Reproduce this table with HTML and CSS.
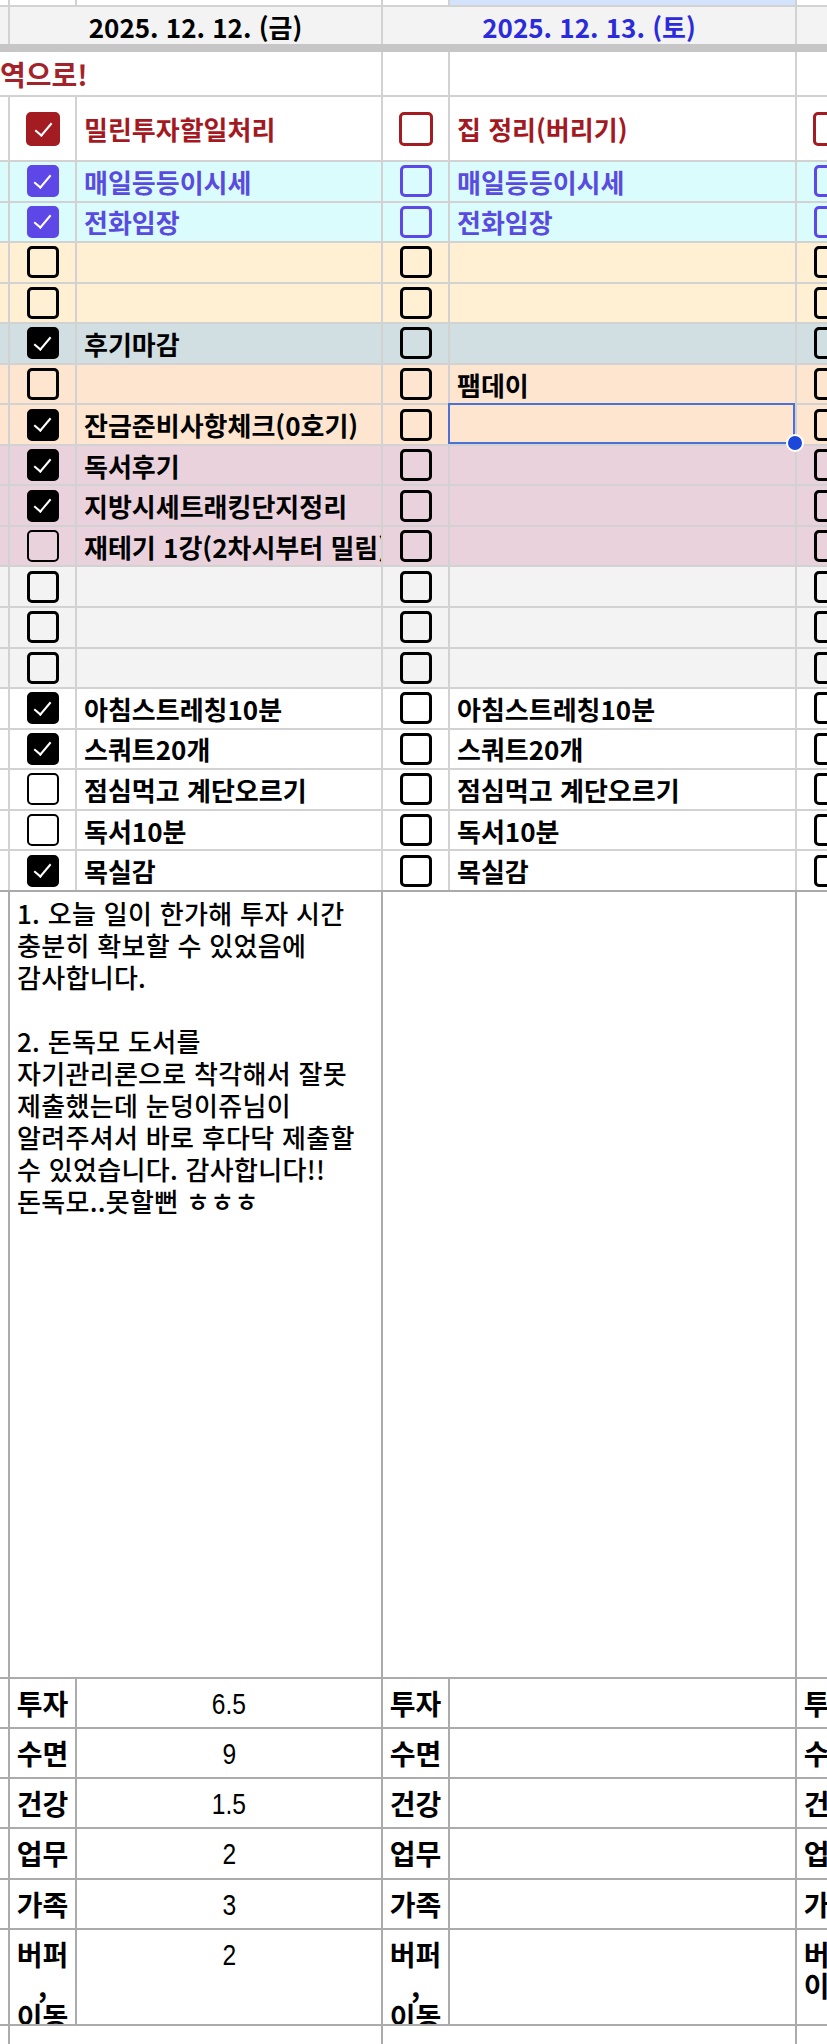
FILE: index.html
```html
<!DOCTYPE html>
<html lang="ko">
<head>
<meta charset="utf-8">
<title>Daily sheet</title>
<link rel="stylesheet" href="styles.css">
</head>
<body>
<div class="sheet">
  <div class="row r-top">
    <div class="c"></div><div class="c"></div><div class="c"></div><div class="c"></div><div class="c blue"></div><div class="c"></div>
  </div>
  <div class="row r-head">
    <div class="c"></div>
    <div class="c date span2">2025. 12. 12. (금)</div>
    <div class="c date sat span2">2025. 12. 13. (토)</div>
    <div class="c"></div>
  </div>
  <div class="freeze"></div>
  <div class="row r-title">
    <div class="c title span3">역으로!</div>
    <div class="c"></div><div class="c"></div><div class="c"></div>
  </div>

  <div class="row r-big red">
    <div class="c"></div>
    <div class="c cb"><span class="box on"></span></div>
    <div class="c t">밀린투자할일처리</div>
    <div class="c cb"><span class="box"></span></div>
    <div class="c t">집 정리(버리기)</div>
    <div class="c cb"><span class="box"></span></div>
  </div>

  <div class="row task cyan purple">
    <div class="c"></div>
    <div class="c cb"><span class="box on"></span></div>
    <div class="c t">매일등등이시세</div>
    <div class="c cb"><span class="box"></span></div>
    <div class="c t">매일등등이시세</div>
    <div class="c cb"><span class="box"></span></div>
  </div>
  <div class="row task cyan purple">
    <div class="c"></div>
    <div class="c cb"><span class="box on"></span></div>
    <div class="c t">전화임장</div>
    <div class="c cb"><span class="box"></span></div>
    <div class="c t">전화임장</div>
    <div class="c cb"><span class="box"></span></div>
  </div>
  <div class="row task orange">
    <div class="c"></div>
    <div class="c cb"><span class="box"></span></div>
    <div class="c t"></div>
    <div class="c cb"><span class="box"></span></div>
    <div class="c t"></div>
    <div class="c cb"><span class="box"></span></div>
  </div>
  <div class="row task orange">
    <div class="c"></div>
    <div class="c cb"><span class="box"></span></div>
    <div class="c t"></div>
    <div class="c cb"><span class="box"></span></div>
    <div class="c t"></div>
    <div class="c cb"><span class="box"></span></div>
  </div>
  <div class="row task slate">
    <div class="c"></div>
    <div class="c cb"><span class="box on"></span></div>
    <div class="c t">후기마감</div>
    <div class="c cb"><span class="box"></span></div>
    <div class="c t"></div>
    <div class="c cb"><span class="box"></span></div>
  </div>
  <div class="row task peach">
    <div class="c"></div>
    <div class="c cb"><span class="box"></span></div>
    <div class="c t"></div>
    <div class="c cb"><span class="box"></span></div>
    <div class="c t">팸데이</div>
    <div class="c cb"><span class="box"></span></div>
  </div>
  <div class="row task peach">
    <div class="c"></div>
    <div class="c cb"><span class="box on"></span></div>
    <div class="c t">잔금준비사항체크(0호기)</div>
    <div class="c cb"><span class="box"></span></div>
    <div class="c t sel"></div>
    <div class="c cb"><span class="box"></span></div>
  </div>
  <div class="row task pink">
    <div class="c"></div>
    <div class="c cb"><span class="box on"></span></div>
    <div class="c t">독서후기</div>
    <div class="c cb"><span class="box"></span></div>
    <div class="c t"></div>
    <div class="c cb"><span class="box"></span></div>
  </div>
  <div class="row task pink">
    <div class="c"></div>
    <div class="c cb"><span class="box on"></span></div>
    <div class="c t">지방시세트래킹단지정리</div>
    <div class="c cb"><span class="box"></span></div>
    <div class="c t"></div>
    <div class="c cb"><span class="box"></span></div>
  </div>
  <div class="row task pink">
    <div class="c"></div>
    <div class="c cb"><span class="box thin"></span></div>
    <div class="c t">재테기 1강(2차시부터 밀림)</div>
    <div class="c cb"><span class="box"></span></div>
    <div class="c t"></div>
    <div class="c cb"><span class="box"></span></div>
  </div>
  <div class="row task grey">
    <div class="c"></div>
    <div class="c cb"><span class="box"></span></div>
    <div class="c t"></div>
    <div class="c cb"><span class="box"></span></div>
    <div class="c t"></div>
    <div class="c cb"><span class="box"></span></div>
  </div>
  <div class="row task grey">
    <div class="c"></div>
    <div class="c cb"><span class="box"></span></div>
    <div class="c t"></div>
    <div class="c cb"><span class="box"></span></div>
    <div class="c t"></div>
    <div class="c cb"><span class="box"></span></div>
  </div>
  <div class="row task grey">
    <div class="c"></div>
    <div class="c cb"><span class="box"></span></div>
    <div class="c t"></div>
    <div class="c cb"><span class="box"></span></div>
    <div class="c t"></div>
    <div class="c cb"><span class="box"></span></div>
  </div>
  <div class="row task">
    <div class="c"></div>
    <div class="c cb"><span class="box on"></span></div>
    <div class="c t">아침스트레칭10분</div>
    <div class="c cb"><span class="box"></span></div>
    <div class="c t">아침스트레칭10분</div>
    <div class="c cb"><span class="box"></span></div>
  </div>
  <div class="row task">
    <div class="c"></div>
    <div class="c cb"><span class="box on"></span></div>
    <div class="c t">스쿼트20개</div>
    <div class="c cb"><span class="box"></span></div>
    <div class="c t">스쿼트20개</div>
    <div class="c cb"><span class="box"></span></div>
  </div>
  <div class="row task">
    <div class="c"></div>
    <div class="c cb"><span class="box thin"></span></div>
    <div class="c t">점심먹고 계단오르기</div>
    <div class="c cb"><span class="box"></span></div>
    <div class="c t">점심먹고 계단오르기</div>
    <div class="c cb"><span class="box"></span></div>
  </div>
  <div class="row task">
    <div class="c"></div>
    <div class="c cb"><span class="box thin"></span></div>
    <div class="c t">독서10분</div>
    <div class="c cb"><span class="box"></span></div>
    <div class="c t">독서10분</div>
    <div class="c cb"><span class="box"></span></div>
  </div>
  <div class="row task last">
    <div class="c"></div>
    <div class="c cb"><span class="box on"></span></div>
    <div class="c t">목실감</div>
    <div class="c cb"><span class="box"></span></div>
    <div class="c t">목실감</div>
    <div class="c cb"><span class="box"></span></div>
  </div>

  <div class="row r-note dark">
    <div class="c"></div>
    <div class="c note span2">1. 오늘 일이 한가해 투자 시간<br>충분히 확보할 수 있었음에<br>감사합니다.<br><br>2. 돈독모 도서를<br>자기관리론으로 착각해서 잘못<br>제출했는데 눈덩이쥬님이<br>알려주셔서 바로 후다닥 제출할<br>수 있었습니다. 감사합니다!!<br>돈독모..못할뻔 ㅎㅎㅎ</div>
    <div class="c span2"></div>
    <div class="c"></div>
  </div>

  <div class="row stat dark">
    <div class="c"></div>
    <div class="c lbl">투자</div><div class="c val"><span>6.5</span></div>
    <div class="c lbl">투자</div><div class="c val"></div>
    <div class="c lbl">투자</div>
  </div>
  <div class="row stat dark">
    <div class="c"></div>
    <div class="c lbl">수면</div><div class="c val"><span>9</span></div>
    <div class="c lbl">수면</div><div class="c val"></div>
    <div class="c lbl">수면</div>
  </div>
  <div class="row stat dark">
    <div class="c"></div>
    <div class="c lbl">건강</div><div class="c val"><span>1.5</span></div>
    <div class="c lbl">건강</div><div class="c val"></div>
    <div class="c lbl">건강</div>
  </div>
  <div class="row stat dark">
    <div class="c"></div>
    <div class="c lbl">업무</div><div class="c val"><span>2</span></div>
    <div class="c lbl">업무</div><div class="c val"></div>
    <div class="c lbl">업무</div>
  </div>
  <div class="row stat dark">
    <div class="c"></div>
    <div class="c lbl">가족</div><div class="c val"><span>3</span></div>
    <div class="c lbl">가족</div><div class="c val"></div>
    <div class="c lbl">가족</div>
  </div>
  <div class="row stat tall dark">
    <div class="c"></div>
    <div class="c lbl">버퍼<br>,<br>이동</div><div class="c val"><span>2</span></div>
    <div class="c lbl">버퍼<br>,<br>이동</div><div class="c val"></div>
    <div class="c lbl">버퍼<br>이동</div>
  </div>
  <div class="row r-end dark">
    <div class="c"></div>
    <div class="c span2"></div>
    <div class="c span2"></div>
    <div class="c"></div>
  </div>
</div>
</body>
</html>
```

FILE: styles.css
```css
* { box-sizing: border-box; margin: 0; padding: 0; }

body {
  margin: 0;
  background: #fff;
  font-family: "Noto Sans CJK KR", "Noto Sans", sans-serif;
  color: #111;
}

.sheet {
  width: 827px;
  height: 2044px;
  overflow: hidden;
  background: #fff;
}

.row {
  --line: #d2d2d2;
  --bg: #fff;
  width: 862px;
  display: grid;
  grid-template-columns: 8px 65px 304px 65px 345px 65px;
  column-gap: 2px;
  background: var(--line);
  border-bottom: 2px solid var(--line);
}

.c {
  background: var(--bg);
  display: flex;
  align-items: center;
  overflow: hidden;
  min-width: 0;
}

.span2 { grid-column: span 2; }
.span3 { grid-column: span 3; }

/* top strip */
.r-top { height: 7px; }
.r-top .blue { background: #d3e3fb; }

/* date header */
.r-head { height: 37px; border-bottom: 0; --bg: #f3f3f3; }
.date {
  justify-content: center;
  font-size: 26px;
  font-weight: 700;
  padding-top: 1px;
  color: #000;
}
.date.sat { color: #2b2bdc; }

.freeze { height: 8px; width: 827px; background: #c6c6c6; }

/* title */
.r-title { height: 45px; }
.title {
  font-size: 28px;
  font-weight: 700;
  color: #a3232a;
  white-space: nowrap;
}

/* task rows */
.task { height: 40.56px; }
.r-big { height: 65px; }

.cb { justify-content: center; }

.box {
  --ink: #000;
  position: relative;
  display: block;
  width: 32px;
  height: 32px;
  border: 3.5px solid var(--ink);
  border-radius: 5px;
}
.box.thin { border-width: 2.5px; }
.box.on { background: var(--ink); }
.box.on::after {
  content: "";
  position: absolute;
  left: 8.5px;
  top: 2.5px;
  width: 7px;
  height: 15px;
  border-right: 2.5px solid #fff;
  border-bottom: 2.5px solid #fff;
  transform: rotate(40deg);
}

.t {
  padding-left: 7px;
  font-size: 26px;
  font-weight: 700;
  white-space: nowrap;
  color: #000;
}

.red .box { --ink: #a21c22; width: 34px; height: 34px; }
.red .box.on::after { left: 10px; top: 4px; }
.red .t { font-size: 26px; color: #a3191f; }

.purple .box { --ink: #5d47e6; }
.purple .t { color: #5a4be0; }

.cyan   { --bg: #dbfcfd; }
.orange { --bg: #fff0d3; }
.slate  { --bg: #d1dee2; }
.peach  { --bg: #fde5d0; }
.pink   { --bg: #ead2dc; }
.grey   { --bg: #f3f3f3; }

.last { border-bottom-color: #aaaaaa; }

/* selected cell */
.sel { position: relative; overflow: visible; }
.sel::before {
  content: "";
  position: absolute;
  left: -2px;
  top: -2px;
  right: 0;
  bottom: 0;
  border: 2px solid #4a72d6;
}
.sel::after {
  content: "";
  position: absolute;
  right: -9px;
  bottom: -8px;
  width: 14px;
  height: 14px;
  border-radius: 50%;
  background: #1b48d9;
  border: 2px solid #fff;
}

/* notes + stats */
.dark { --line: #ababab; }

.r-note { height: 787px; }
.note {
  display: block;
  padding: 5px 7px;
  font-size: 26px;
  font-weight: 500;
  letter-spacing: 0.3px;
  line-height: 32px;
  white-space: nowrap;
  color: #000;
}

.stat { height: 50.2px; }
.stat.tall { height: 96px; }

.lbl, .val {
  align-items: flex-start;
  justify-content: center;
  text-align: center;
  padding-top: 9px;
  line-height: 31px;
  white-space: nowrap;
  color: #000;
}
.lbl {
  font-size: 28px;
  font-weight: 700;
}
.val {
  font-family: "Liberation Sans", sans-serif;
  font-size: 30px;
  font-weight: 400;
}
.val span {
  display: inline-block;
  transform: scaleX(0.82);
}

.r-end { height: 30px; border-bottom: 0; }
```
